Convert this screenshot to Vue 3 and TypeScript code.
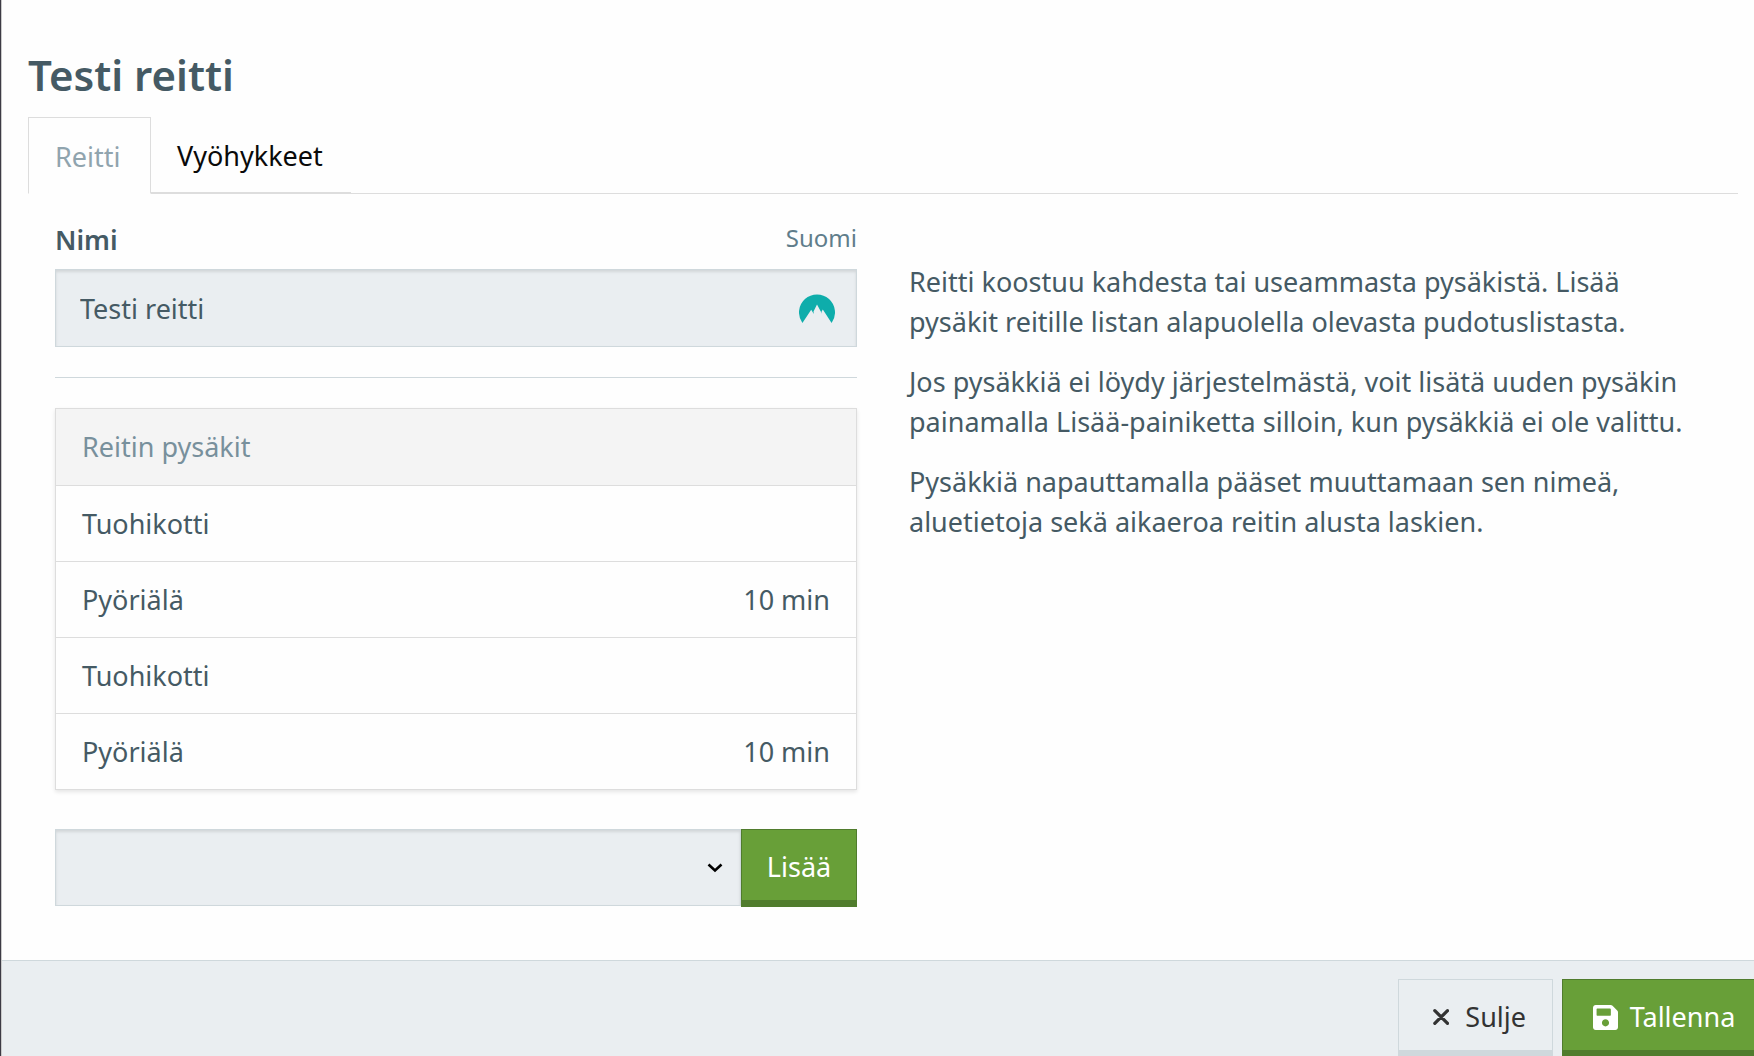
<script setup lang="ts">
import { ref } from 'vue'

interface Stop {
  name: string
  offset?: string
}

const routeName = ref('Testi reitti')
const selectedStop = ref('')
const activeTab = ref('Reitti')
const tabs = ['Reitti', 'Vyöhykkeet']

const stops: Stop[] = [
  { name: 'Tuohikotti' },
  { name: 'Pyöriälä', offset: '10 min' },
  { name: 'Tuohikotti' },
  { name: 'Pyöriälä', offset: '10 min' },
]
</script>

<template>
  <div class="dialog">
    <main class="content">
      <h1>Testi reitti</h1>
      <nav class="tabs">
        <button
          v-for="tab in tabs"
          :key="tab"
          type="button"
          class="tab"
          :class="{ active: tab === activeTab }"
          @click="activeTab = tab"
        >{{ tab }}</button>
      </nav>

      <div class="columns">
        <section class="form">
          <div class="label-row">
            <label for="route-name">Nimi</label>
            <span class="language">Suomi</span>
          </div>
          <div class="name-field">
            <input id="route-name" v-model="routeName" type="text" class="field" />
            <svg class="mountain" viewBox="0 0 36 29" aria-hidden="true">
              <path d="M3.400 29A18 18 0 1 1 32.600 29L23.800 15.600L22.500 17.800L23 19.700L18 10.500L14.500 17.500L14.800 20L12.200 15.700Z" fill="#0eadab" />
            </svg>
          </div>

          <hr />

          <table class="stops">
            <thead>
              <tr><th colspan="2" scope="col">Reitin pysäkit</th></tr>
            </thead>
            <tbody>
              <tr v-for="(stop, index) in stops" :key="index">
                <td>{{ stop.name }}</td>
                <td class="offset">{{ stop.offset }}</td>
              </tr>
            </tbody>
          </table>

          <div class="add-row">
            <div class="select-wrap">
              <select v-model="selectedStop" class="field" aria-label="Pysäkki">
                <option value=""></option>
                <option>Tuohikotti</option>
                <option>Pyöriälä</option>
              </select>
              <svg class="chevron" viewBox="0 0 16 10" aria-hidden="true">
                <path d="M1.500 1.500L8 7.500L14.500 1.500" fill="none" stroke="#000" stroke-width="2.600" />
              </svg>
            </div>
            <button type="button" class="button primary add">Lisää</button>
          </div>
        </section>

        <section class="help">
          <p>Reitti koostuu kahdesta tai useammasta pysäkistä. Lisää pysäkit reitille listan alapuolella olevasta pudotuslistasta.</p>
          <p>Jos pysäkkiä ei löydy järjestelmästä, voit lisätä uuden pysäkin painamalla Lisää-painiketta silloin, kun pysäkkiä ei ole valittu.</p>
          <p>Pysäkkiä napauttamalla pääset muuttamaan sen nimeä, aluetietoja sekä aikaeroa reitin alusta laskien.</p>
        </section>
      </div>
    </main>

    <footer class="footer">
      <button type="button" class="button secondary">
        <svg class="icon-close" viewBox="0 0 18 18" aria-hidden="true">
          <path d="M2 2L16 16M16 2L2 16" fill="none" stroke="#333" stroke-width="3.600" stroke-linecap="round" />
        </svg>
        Sulje
      </button>
      <button type="button" class="button primary save">
        <svg class="icon-save" viewBox="0 32 448 448" aria-hidden="true">
          <path fill="#fff" d="M433.900 129.900l-83.900-83.900A48 48 0 0 0 316.100 32H48C21.500 32 0 53.500 0 80v352c0 26.500 21.500 48 48 48h352c26.500 0 48-21.500 48-48V163.900a48 48 0 0 0-14.100-34zM224 416c-35.300 0-64-28.700-64-64s28.700-64 64-64 64 28.700 64 64-28.700 64-64 64zm96-304.500V212c0 6.600-5.400 12-12 12H76c-6.600 0-12-5.400-12-12V108c0-6.600 5.400-12 12-12h228.500c3.200 0 6.200 1.300 8.500 3.500l3.500 3.500A12 12 0 0 1 320 111.500z" />
        </svg>
        Tallenna
      </button>
    </footer>
  </div>
</template>

<style>
body {
  margin: 0;
  background: #fefefe;
}
</style>

<style scoped>
.dialog,
.dialog * {
  box-sizing: border-box;
}

.dialog {
  display: flex;
  flex-direction: column;
  height: 100vh;
  overflow: hidden;
  border-left: 1px solid #3d3b45;
  box-shadow: inset 1px 0 #cacaca;
  background: #fefefe;
  color: #455a64;
  font: 27px/40px "Noto Sans", "Open Sans", sans-serif;
}

.content {
  flex-shrink: 0;
  padding: 47px 16px 53px 27px;
}

h1 {
  margin: 0 0 14px;
  font-size: 42px;
  line-height: 56px;
  font-weight: 600;
}

.tabs {
  display: flex;
  height: 77px;
  border-bottom: 1px solid #ddd;
}

.tab {
  min-width: 123px;
  height: 77px;
  padding: 3px 28px 0 26px;
  border: 0;
  border-bottom: 2px solid #ddd;
  background: none;
  color: #0a0a0a;
  font: inherit;
  text-align: left;
  cursor: pointer;
}

.tab.active {
  border: 1px solid #ddd;
  border-bottom-color: #fefefe;
  background: #fefefe;
  color: #90a4ae;
}

.columns {
  display: grid;
  grid-template-columns: 1fr 1fr;
  gap: 52px;
  padding: 26px 27px 0;
}

.label-row {
  display: flex;
  justify-content: space-between;
  height: 49px;
}

.label-row label {
  font-weight: 600;
}

.language {
  color: #607d8b;
  font-size: 24px;
  line-height: 36px;
}

.field {
  display: block;
  width: 100%;
  height: 78px;
  padding: 0 24px;
  border: 1px solid #cfd8dc;
  border-radius: 0;
  background: #eaeef1;
  box-shadow: inset 0 2px 3px rgba(10, 10, 10, 0.1);
  color: #455a64;
  font: inherit;
  outline: none;
  appearance: none;
}

select.field {
  height: 77px;
}

.name-field,
.select-wrap {
  position: relative;
}

.mountain {
  position: absolute;
  top: 25px;
  right: 22px;
  width: 36px;
  height: 29px;
}

hr {
  margin: 30px 0;
  border: 0;
  border-top: 1px solid #cfd8dc;
}

.stops {
  width: 100%;
  border: 1px solid #ddd;
  border-spacing: 0;
  box-shadow: 0 2px 4px rgba(10, 10, 10, 0.1);
}

.stops th,
.stops td {
  height: 76px;
  padding: 0 26px;
  text-align: left;
  font-weight: 400;
}

.stops th {
  background: #f4f4f4;
  color: #78909c;
}

.stops td {
  border-top: 1px solid #ddd;
}

.stops .offset {
  text-align: right;
}

.add-row {
  display: flex;
  margin-top: 39px;
}

.select-wrap {
  flex: 1;
}

.chevron {
  position: absolute;
  top: 34px;
  right: 18px;
  width: 16px;
  height: 10px;
  pointer-events: none;
}

.button {
  display: flex;
  align-items: center;
  justify-content: center;
  height: 78px;
  padding: 4px 26px 0;
  border: 1px solid;
  border-bottom-width: 7px;
  border-radius: 0;
  font: inherit;
  cursor: pointer;
}

.primary {
  border-color: #507c2d;
  background: #689f38;
  color: #fff;
}

.secondary {
  width: 155px;
  padding-left: 34px;
  border-color: #cfd8dc;
  background: #eaeef1;
  color: #333;
  gap: 16px;
}

.add {
  width: 116px;
}

.save {
  width: 204px;
  gap: 12px;
}

.help {
  padding-top: 42px;
}

.help p {
  margin: 0 0 20px;
}

.footer {
  display: flex;
  flex: 1 0 97px;
  align-items: flex-start;
  justify-content: flex-end;
  gap: 9px;
  margin: 0 -12px 0 1px;
  padding-top: 18px;
  border-top: 1px solid #cfd8dc;
  background: #eaeef1;
}

.icon-close {
  width: 18px;
  height: 18px;
}

.icon-save {
  width: 25px;
  height: 25px;
}
</style>
